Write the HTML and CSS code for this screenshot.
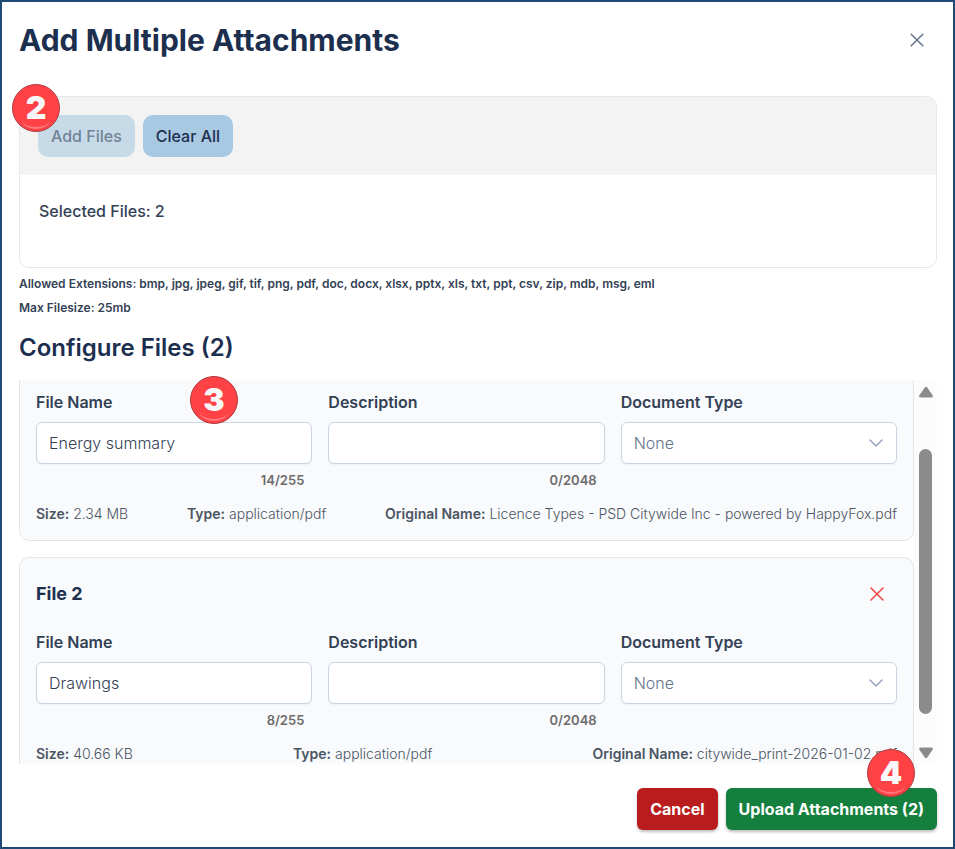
FILE: index.html
```html
<!DOCTYPE html>
<html lang="en">
<head>
  <meta charset="UTF-8">
  <meta name="viewport" content="width=device-width, initial-scale=1.0">
  <title>Add Multiple Attachments</title>
  <link rel="stylesheet" href="styles.css">
</head>
<body>
  <div class="dialog">
    <div class="dialog-header">
      <h1>Add Multiple Attachments</h1>
      <button type="button" class="icon-btn" aria-label="Close">
        <svg width="14" height="14" viewBox="0 0 14 14"><path d="M1.2 1.2l11.6 11.6M12.8 1.2L1.2 12.8"/></svg>
      </button>
    </div>

    <div class="upload-panel">
      <span class="badge badge-add">2</span>
      <div class="toolbar">
        <button type="button" class="btn btn-light" disabled>Add Files</button>
        <button type="button" class="btn btn-light">Clear All</button>
      </div>
      <div class="selected">Selected Files: 2</div>
    </div>

    <div class="rules">
      <p>Allowed Extensions: bmp, jpg, jpeg, gif, tif, png, pdf, doc, docx, xlsx, pptx, xls, txt, ppt, csv, zip, mdb, msg, eml</p>
      <p>Max Filesize: 25mb</p>
    </div>

    <h2>Configure Files (2)</h2>

    <div class="files">
      <span class="badge badge-configure">3</span>
      <div class="file-list" id="fileList">
        <div class="card">
          <div class="card-head">
            <h3>File 1</h3>
            <button type="button" class="icon-btn remove" aria-label="Remove file 1">
              <svg width="14" height="14" viewBox="0 0 14 14"><path d="M1 1l12 12M13 1L1 13"/></svg>
            </button>
          </div>
          <div class="fields">
            <div class="field">
              <label for="name1">File Name</label>
              <input type="text" id="name1" value="Energy summary" maxlength="255">
              <span class="counter">14/255</span>
            </div>
            <div class="field">
              <label for="desc1">Description</label>
              <input type="text" id="desc1" maxlength="2048">
              <span class="counter">0/2048</span>
            </div>
            <div class="field">
              <label for="type1">Document Type</label>
              <div class="select-wrap">
                <select id="type1"><option>None</option></select>
                <svg width="14" height="14" viewBox="0 0 14 14"><path d="M1 4l6 6 6-6"/></svg>
              </div>
            </div>
          </div>
          <div class="meta">
            <span><b>Size:</b> 2.34 MB</span>
            <span><b>Type:</b> application/pdf</span>
            <span><b>Original Name:</b> Licence Types - PSD Citywide Inc - powered by HappyFox.pdf</span>
          </div>
        </div>

        <div class="card">
          <div class="card-head">
            <h3>File 2</h3>
            <button type="button" class="icon-btn remove" aria-label="Remove file 2">
              <svg width="14" height="14" viewBox="0 0 14 14"><path d="M1 1l12 12M13 1L1 13"/></svg>
            </button>
          </div>
          <div class="fields">
            <div class="field">
              <label for="name2">File Name</label>
              <input type="text" id="name2" value="Drawings" maxlength="255">
              <span class="counter">8/255</span>
            </div>
            <div class="field">
              <label for="desc2">Description</label>
              <input type="text" id="desc2" maxlength="2048">
              <span class="counter">0/2048</span>
            </div>
            <div class="field">
              <label for="type2">Document Type</label>
              <div class="select-wrap">
                <select id="type2"><option>None</option></select>
                <svg width="14" height="14" viewBox="0 0 14 14"><path d="M1 4l6 6 6-6"/></svg>
              </div>
            </div>
          </div>
          <div class="meta">
            <span><b>Size:</b> 40.66 KB</span>
            <span><b>Type:</b> application/pdf</span>
            <span><b>Original Name:</b> citywide_print-2026-01-02.pdf</span>
          </div>
        </div>
      </div>
      <div class="scrollbar">
        <svg width="16" height="12" viewBox="0 0 16 12"><path d="M6.8 1.4L1.4 9.2Q.6 11.5 2.6 11.5H13.4Q15.4 11.5 14.6 9.2L9.2 1.4Q8 .2 6.8 1.4z"/></svg>
        <div class="track"><div class="thumb"></div></div>
        <svg width="16" height="12" viewBox="0 0 16 12"><path d="M6.8 10.6L1.4 2.8Q.6 .5 2.6 .5H13.4Q15.4 .5 14.6 2.8L9.2 10.6Q8 11.8 6.8 10.6z"/></svg>
      </div>
    </div>

    <div class="dialog-footer">
      <button type="button" class="btn btn-cancel">Cancel</button>
      <button type="button" class="btn btn-upload">Upload Attachments (2)</button>
      <span class="badge badge-upload">4</span>
    </div>
  </div>

  <script>
    document.getElementById('fileList').scrollTop = 63;
  </script>
</body>
</html>
```

FILE: styles.css
```css
* {
  margin: 0;
  padding: 0;
  box-sizing: border-box;
}
body {
  font-family: Inter, "Liberation Sans", sans-serif;
  font-size: 16px;
  line-height: 24px;
  color: #334155;
  background: #fff;
}
button, input, select {
  font: inherit;
}
.dialog {
  display: flex;
  flex-direction: column;
  height: 100vh;
  padding: 0 16px 0 17px;
  border: 2px solid #1f4a75;
}
.dialog-header {
  display: flex;
  justify-content: space-between;
  align-items: center;
  padding: 18px 0 36px;
}
h1, h2, h3 {
  color: #1c2f4f;
  font-weight: 700;
}
h1 {
  font-size: 30px;
  line-height: 40px;
}
h2 {
  margin: 12px 0 16px;
  font-size: 24px;
  font-weight: 600;
  line-height: 32px;
}
h3 {
  font-size: 18px;
}
.icon-btn {
  display: flex;
  align-items: center;
  justify-content: center;
  width: 40px;
  height: 40px;
  border: none;
  background: none;
  cursor: pointer;
}
.icon-btn svg {
  fill: none;
  stroke: #64748b;
  stroke-width: 1.5;
  stroke-linecap: round;
}
.icon-btn.remove svg {
  stroke: #ef4444;
}
.upload-panel {
  position: relative;
  border: 1px solid #e2e8f0;
  border-radius: 10px;
}
.toolbar {
  display: flex;
  gap: 8px;
  padding: 18px;
  background: #f3f3f3;
  border-radius: 9px 9px 0 0;
}
.btn {
  height: 42px;
  padding: 0 13px;
  border: none;
  border-radius: 6px;
  color: #fff;
  font-weight: 700;
  cursor: pointer;
}
.btn-light {
  border-radius: 10px;
  background: #a9c8e2;
  color: #1c2f4f;
  font-weight: 500;
}
.btn-light:disabled {
  background: #c7dae8;
  color: #728396;
  cursor: default;
}
.selected {
  padding: 24px 19px 44px;
  font-weight: 500;
}
.rules {
  margin-top: 4px;
  font-size: 12px;
  font-weight: 600;
}
.files {
  position: relative;
  display: flex;
  flex: 1;
  min-height: 0;
}
.file-list {
  display: flex;
  flex: 1;
  flex-direction: column;
  gap: 16px;
  overflow-y: auto;
  scrollbar-width: none;
}
.card {
  flex-shrink: 0;
  padding: 16px;
  border: 1px solid #e2e5ea;
  border-radius: 10px;
  background: #f9fafc;
}
.card-head {
  display: flex;
  justify-content: space-between;
  align-items: center;
  margin-bottom: 16px;
}
.fields {
  display: grid;
  grid-template-columns: repeat(3, 1fr);
  gap: 16px;
}
.field label {
  display: block;
  margin-bottom: 8px;
  font-weight: 600;
}
.field input,
.field select {
  display: block;
  width: 100%;
  height: 42px;
  padding: 0 12px;
  border: 1px solid #cbd5e1;
  border-radius: 6px;
  background: #fff;
  color: #334155;
  font-weight: 300;
  box-shadow: 0 1px 2px rgba(18, 18, 23, 0.05);
}
.field select {
  appearance: none;
  color: #64748b;
}
.select-wrap {
  position: relative;
}
.select-wrap svg {
  position: absolute;
  top: 14px;
  right: 14px;
  fill: none;
  stroke: #94a3b8;
  stroke-width: 1.5;
  stroke-linecap: round;
  stroke-linejoin: round;
  pointer-events: none;
}
.counter {
  display: block;
  margin-top: 8px;
  padding-right: 8px;
  font-size: 13px;
  line-height: 16px;
  font-weight: 600;
  text-align: right;
  color: #6b6b6b;
}
.meta {
  display: flex;
  justify-content: space-between;
  margin-top: 16px;
  font-size: 14px;
  font-weight: 300;
  line-height: 20px;
  color: #4b5563;
}
.meta b {
  font-weight: 600;
}
.scrollbar {
  display: flex;
  flex-direction: column;
  align-items: center;
  width: 23px;
  padding: 6px 0 5px;
  background: #fcfcfc;
}
.scrollbar svg {
  fill: #8b8b8b;
}
.track {
  display: flex;
  flex: 1;
  flex-direction: column;
  justify-content: flex-end;
  padding-bottom: 33px;
}
.thumb {
  width: 13px;
  height: 84%;
  border-radius: 7px;
  background: #8b8b8b;
}
.dialog-footer {
  position: relative;
  display: flex;
  justify-content: flex-end;
  gap: 8px;
  padding: 24px 0 17px;
}
.btn-cancel,
.btn-upload {
  box-shadow: 0 2px 3px rgba(0, 0, 0, 0.25);
}
.btn-cancel {
  background: #b91c1c;
}
.btn-upload {
  background: #15803d;
}
/* numbered step markers */
.badge {
  position: absolute;
  z-index: 1;
  width: 48px;
  height: 48px;
  border: 1px solid #b03a40;
  border-radius: 50%;
  background: #ff4245;
  color: #f8f8f8;
  font-family: Inter, sans-serif;
  font-size: 32px;
  font-weight: 900;
  line-height: 46px;
  text-align: center;
}
.badge::after {
  content: "";
  position: absolute;
  left: 9px;
  bottom: 2px;
  width: 28px;
  height: 16px;
  border-bottom: 2px solid #ff7b7d;
  border-radius: 50%;
}
.badge-add {
  top: -13px;
  left: -8px;
}
.badge-configure {
  top: -4px;
  left: 171px;
}
.badge-upload {
  top: -15px;
  right: 22px;
}
```
